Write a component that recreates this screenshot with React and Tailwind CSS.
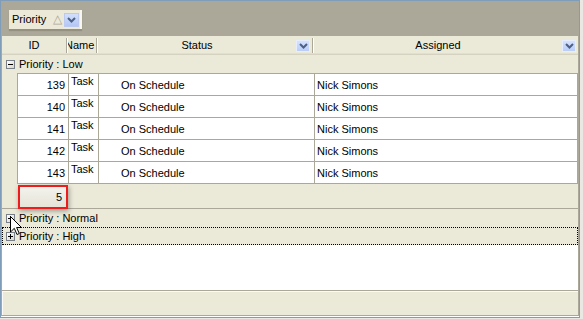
import React from 'react';

const rows = [139, 140, 141, 142, 143];

function Chevron({ className = '' }) {
  return (
    <svg width="9" height="6" viewBox="0 0 9 6" className={className}>
      <polyline points="1,1 4.5,4.5 8,1" fill="none" stroke="#4d6185" strokeWidth="2" />
    </svg>
  );
}

function FilterButton({ className = '' }) {
  return (
    <div className={`w-[14px] h-[12px] flex items-center justify-center border border-[#e6edfd] bg-gradient-to-b from-[#d6e2fd] to-[#b9cdf8] ${className}`}>
      <Chevron />
    </div>
  );
}

function ExpandBox({ open }) {
  return (
    <div className="w-[9px] h-[9px] border border-[#7a8089] bg-gradient-to-br from-white to-[#d9d6c8] relative shrink-0">
      <div className="absolute left-[1px] top-[3px] w-[5px] h-px bg-black" />
      {!open && <div className="absolute left-[3px] top-[1px] w-px h-[5px] bg-black" />}
    </div>
  );
}

function HeaderSep() {
  return (
    <div className="flex h-[15px] shrink-0">
      <div className="w-px bg-[#aca899]" />
      <div className="w-px bg-white" />
    </div>
  );
}

export default function App() {
  return (
    <div className="w-[583px] h-[319px] bg-[#e9e8e2] font-['Liberation_Sans',Arial,sans-serif] text-[11px] text-black leading-[13px]">
      <div className="relative w-[580px] h-[318px] border border-[#7f9db9] bg-white flex flex-col">
        {/* Group-by panel */}
        <div className="h-[35px] shrink-0 bg-[#aca899] pl-[8px] pt-[9px]">
          <div className="w-[73px] h-[19px] bg-[#ece9d8] flex items-center border-r-2 border-r-[#f7f6f0] shadow-[0_2px_1px_rgba(120,117,100,0.45)]">
            <span className="pl-[3px]">Priority</span>
            <span className="ml-[7px] text-[#aca899] text-[12px]">△</span>
            <div className="ml-[2px] w-[15px] h-[14px] flex items-center justify-center border border-[#bccaf0] bg-gradient-to-b from-[#d3dffc] to-[#b3c7f6]">
              <Chevron />
            </div>
          </div>
        </div>

        {/* Column headers */}
        <div className="h-[19px] shrink-0 flex items-center bg-[#ebe9d8] border-x border-[#aca899] shadow-[inset_0_-1px_0_#d6d2c2,inset_0_-2px_0_#e2dfd0]">
          <div className="w-[64px] text-center">ID</div>
          <HeaderSep />
          <div className="w-[28px] overflow-hidden whitespace-nowrap">
            <span className="ml-[-3px]">Name</span>
          </div>
          <HeaderSep />
          <div className="w-[214px] flex items-center">
            <div className="flex-1 text-center">Status</div>
            <FilterButton className="mr-[2px]" />
          </div>
          <HeaderSep />
          <div className="flex-1 flex items-center">
            <div className="flex-1 text-center">Assigned</div>
            <FilterButton className="mr-[2px]" />
          </div>
        </div>

        {/* Group: Low */}
        <div className="h-[18px] shrink-0 flex items-center bg-[#ebe9d8] border-x border-[#aca899] pl-[4px] gap-[4px]">
          <ExpandBox open />
          <span>Priority : Low</span>
        </div>

        {/* Rows */}
        <div className="shrink-0 flex bg-[#ebe9d8] border-x border-[#aca899]">
          <div className="w-[15px] shrink-0" />
          <div className="flex-1 border-t border-[#aca899] bg-white">
            {rows.map((id) => (
              <div key={id} className="h-[22px] flex border-b border-[#aca899]">
                <div className="w-[51px] border-l border-[#aca899] flex items-center justify-end pr-[3px] pt-[2px]">{id}</div>
                <div className="w-[30px] border-l border-[#aca899] pl-[2px] pt-[1px]">Task</div>
                <div className="w-[216px] border-l border-[#aca899] flex items-center pl-[22px] pt-[2px]">On Schedule</div>
                <div className="flex-1 border-x border-[#aca899] flex items-center pl-[2px] pt-[2px]">Nick Simons</div>
              </div>
            ))}
          </div>
        </div>

        {/* Summary */}
        <div className="h-[25px] shrink-0 bg-[#ebe9d8] border-x border-b border-[#aca899] pl-[16px] pt-px">
          <div className="relative z-10 w-[50px] h-[24px] border-2 border-[#ee1c1c] bg-gradient-to-b from-[#f3f2ec] to-[#e6e4d8] flex items-center justify-end pr-[4px] shadow-[1px_2px_5px_rgba(0,0,0,0.35)]">
            5
          </div>
        </div>

        {/* Group: Normal */}
        <div className="h-[18px] shrink-0 flex items-center bg-[#ebe9d8] border-x border-[#aca899] pl-[4px] gap-[4px]">
          <ExpandBox />
          <span>Priority : Normal</span>
        </div>

        {/* Group: High */}
        <div className="h-[18px] shrink-0 flex items-center bg-[#ebe9d8] border-x border-[#aca899]">
          <div className="h-[18px] flex-1 flex items-center gap-[4px] pl-[3px] border border-dotted border-black">
            <ExpandBox />
            <span>Priority : High</span>
          </div>
        </div>

        <div className="flex-1 border-x border-[#aca899]" />

        {/* Footer */}
        <div className="h-[26px] shrink-0 bg-[#ebe9d8] border border-[#aca899] shadow-[inset_1px_1px_0_#fbfaf6]" />
        <div className="h-px shrink-0" />

        {/* Mouse pointer */}
        <svg className="absolute left-[9px] top-[215px] z-20" width="13" height="20" viewBox="0 0 13 20">
          <path d="M0.5 0.5 V16 L4.3 12.3 L7 18.5 L9.3 17.5 L6.6 11.5 H11.5 Z" fill="white" stroke="black" strokeWidth="1" strokeLinejoin="miter" />
        </svg>
      </div>
    </div>
  );
}
